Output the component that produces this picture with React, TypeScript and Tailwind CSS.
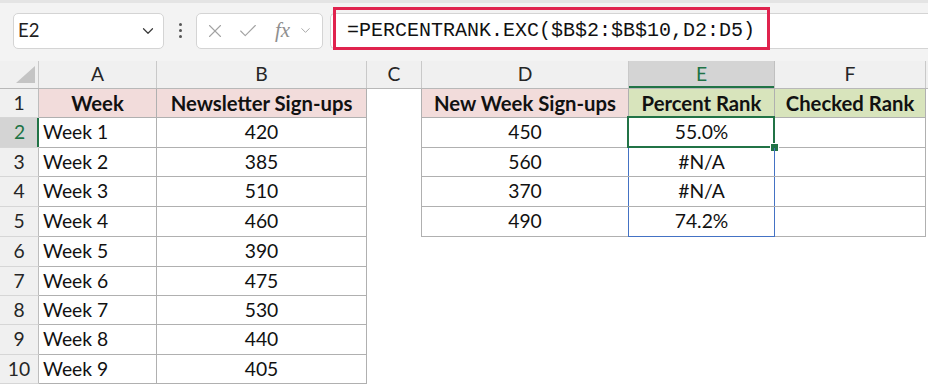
import { Check, ChevronDown, X } from "lucide-react";

const cols = [
  { key: "A", w: "w-[118px]" },
  { key: "B", w: "w-[210px]" },
  { key: "C", w: "w-[55px]" },
  { key: "D", w: "w-[207px]" },
  { key: "E", w: "w-[146px]" },
  { key: "F", w: "w-[151px]" },
];

const heights = ["h-[29px]", "h-[30px]", "h-[29px]", "h-[30px]", "h-[30px]", "h-[30px]", "h-[29px]", "h-[29px]", "h-[30px]", "h-[29px]"];

const signups = [
  ["Week", "Newsletter Sign-ups"],
  ["Week 1", "420"],
  ["Week 2", "385"],
  ["Week 3", "510"],
  ["Week 4", "460"],
  ["Week 5", "390"],
  ["Week 6", "475"],
  ["Week 7", "530"],
  ["Week 8", "440"],
  ["Week 9", "405"],
];

const lookup = [
  ["New Week Sign-ups", "Percent Rank", "Checked Rank"],
  ["450", "55.0%", ""],
  ["560", "#N/A", ""],
  ["370", "#N/A", ""],
  ["490", "74.2%", ""],
];

const line = "border-[#b0b0b0]";
const bold = "font-bold text-[20.3px]";

function FormulaBar() {
  return (
    <div className="flex h-[61px] items-center border-t-[3px] border-[#e4e4e4] bg-[#f3f3f3] pb-[3px]">
      <div className="ml-[13px] flex h-[36px] w-[151px] items-center rounded-[5px] border border-[#d4d4d4] bg-white pl-[4px] pr-[6px]">
        <span className="text-[18.5px] text-[#1f1f1f]">E2</span>
        <ChevronDown className="ml-auto text-[#3a3a3a]" size={18} strokeWidth={1.6} />
      </div>
      <div className="flex w-[32px] flex-col items-center gap-[3px]">
        <span className="h-[3px] w-[3px] rounded-full bg-[#555]" />
        <span className="h-[3px] w-[3px] rounded-full bg-[#555]" />
        <span className="h-[3px] w-[3px] rounded-full bg-[#555]" />
      </div>
      <div className="flex h-[36px] w-[127px] items-center rounded-[5px] border border-[#d4d4d4] bg-white text-[#a3a3a3]">
        <X className="ml-[7px]" size={22} strokeWidth={1.2} />
        <Check className="ml-[11px]" size={22} strokeWidth={1.2} />
        <span className="ml-[16px] font-['Liberation_Serif',serif] text-[21px] italic leading-none text-[#8f8f8f]">fx</span>
        <ChevronDown className="ml-[8px]" size={15} strokeWidth={1.5} />
      </div>
      <div className="relative ml-[7px] flex h-[36px] flex-1 items-center rounded-l-[5px] border border-r-0 border-[#d4d4d4] bg-white pl-[16px]">
        <span className="font-['Liberation_Mono',monospace] text-[20px] leading-none text-[#111]">=PERCENTRANK.EXC($B$2:$B$10,D2:D5)</span>
        <div className="pointer-events-none absolute -top-[7px] -bottom-[2px] left-[2px] w-[437px] border-[3px] border-[#e0234e]" />
      </div>
    </div>
  );
}

function ColumnHeaders() {
  return (
    <div className="flex h-[28px] border-b border-[#b8b8b8] bg-[#f0f0f0]">
      <div className="flex w-[39px] items-end justify-end border-r border-[#c9c9c9] pb-[5px] pr-[3px]">
        <svg width="19" height="17" viewBox="0 0 19 17">
          <polygon points="19,0 19,17 0,17" fill="#c4c4c4" />
        </svg>
      </div>
      {cols.map((c) => {
        const active = c.key === "E";
        return (
          <div
            key={c.key}
            className={`${c.w} flex items-center justify-center border-r ${active ? "border-[#c0c0c0] bg-[#d4d4d4] text-[#217346] shadow-[inset_0_-2px_0_#217346]" : "border-[#c9c9c9] text-[#262626]"}`}
          >
            {c.key}
          </div>
        );
      })}
      <div className="flex-1" />
    </div>
  );
}

function RowHeader({ n, h }: { n: number; h: string }) {
  const active = n === 2;
  return (
    <div
      className={`${h} flex w-[39px] shrink-0 items-center justify-center border-b border-[#d6d6d6] ${active ? "bg-[#d4d4d4] text-[#217346] shadow-[inset_-2px_0_0_#217346]" : "border-r border-r-[#bdbdbd] bg-[#f0f0f0] text-[#262626]"}`}
    >
      {n}
    </div>
  );
}

function Row({ i }: { i: number }) {
  const h = heights[i];
  const [a, b] = signups[i];
  const head = i === 0;
  const d = lookup[i];
  return (
    <div className="flex">
      <RowHeader n={i + 1} h={h} />
      <div className={`${h} flex w-[118px] items-center border-r border-b ${line} ${head ? `justify-center bg-[#f2dcdb] ${bold}` : "pl-[4px]"}`}>{a}</div>
      <div className={`${h} flex w-[210px] items-center justify-center border-r border-b ${line} ${head ? `bg-[#f2dcdb] ${bold}` : ""}`}>{b}</div>
      <div className={`${h} w-[55px] ${d ? `border-r ${line}` : ""}`} />
      {d ? (
        <>
          <div className={`${h} flex w-[207px] items-center justify-center border-r border-b ${line} ${head ? `bg-[#f2dcdb] ${bold}` : ""}`}>{d[0]}</div>
          <div className={`${h} relative flex w-[146px] items-center justify-center border-r border-b ${line} ${head ? `bg-[#d8e4bc] ${bold}` : ""}`}>
            {d[1]}
            {i > 1 && (
              <div className={`pointer-events-none absolute -left-px -right-px top-0 border-x border-[#4472c4] ${i === 4 ? "-bottom-px border-b" : "bottom-0"}`} />
            )}
            {i === 1 && (
              <>
                <div className="pointer-events-none absolute -left-[2px] -right-px -top-[2px] -bottom-[1px] border-2 border-[#217346]" />
                <div className="pointer-events-none absolute -right-[5px] -bottom-[5px] h-[9px] w-[9px] border border-white bg-[#217346]" />
              </>
            )}
          </div>
          <div className={`${h} flex w-[151px] items-center justify-center border-r border-b ${line} ${head ? `bg-[#d8e4bc] ${bold}` : ""}`}>{d[2]}</div>
        </>
      ) : null}
    </div>
  );
}

export default function App() {
  return (
    <div className="h-[387px] w-[928px] overflow-hidden bg-white font-['Lato','Liberation_Sans',sans-serif] text-[19.3px] text-[#111]">
      <FormulaBar />
      <ColumnHeaders />
      {heights.map((_, i) => (
        <Row key={i} i={i} />
      ))}
    </div>
  );
}
